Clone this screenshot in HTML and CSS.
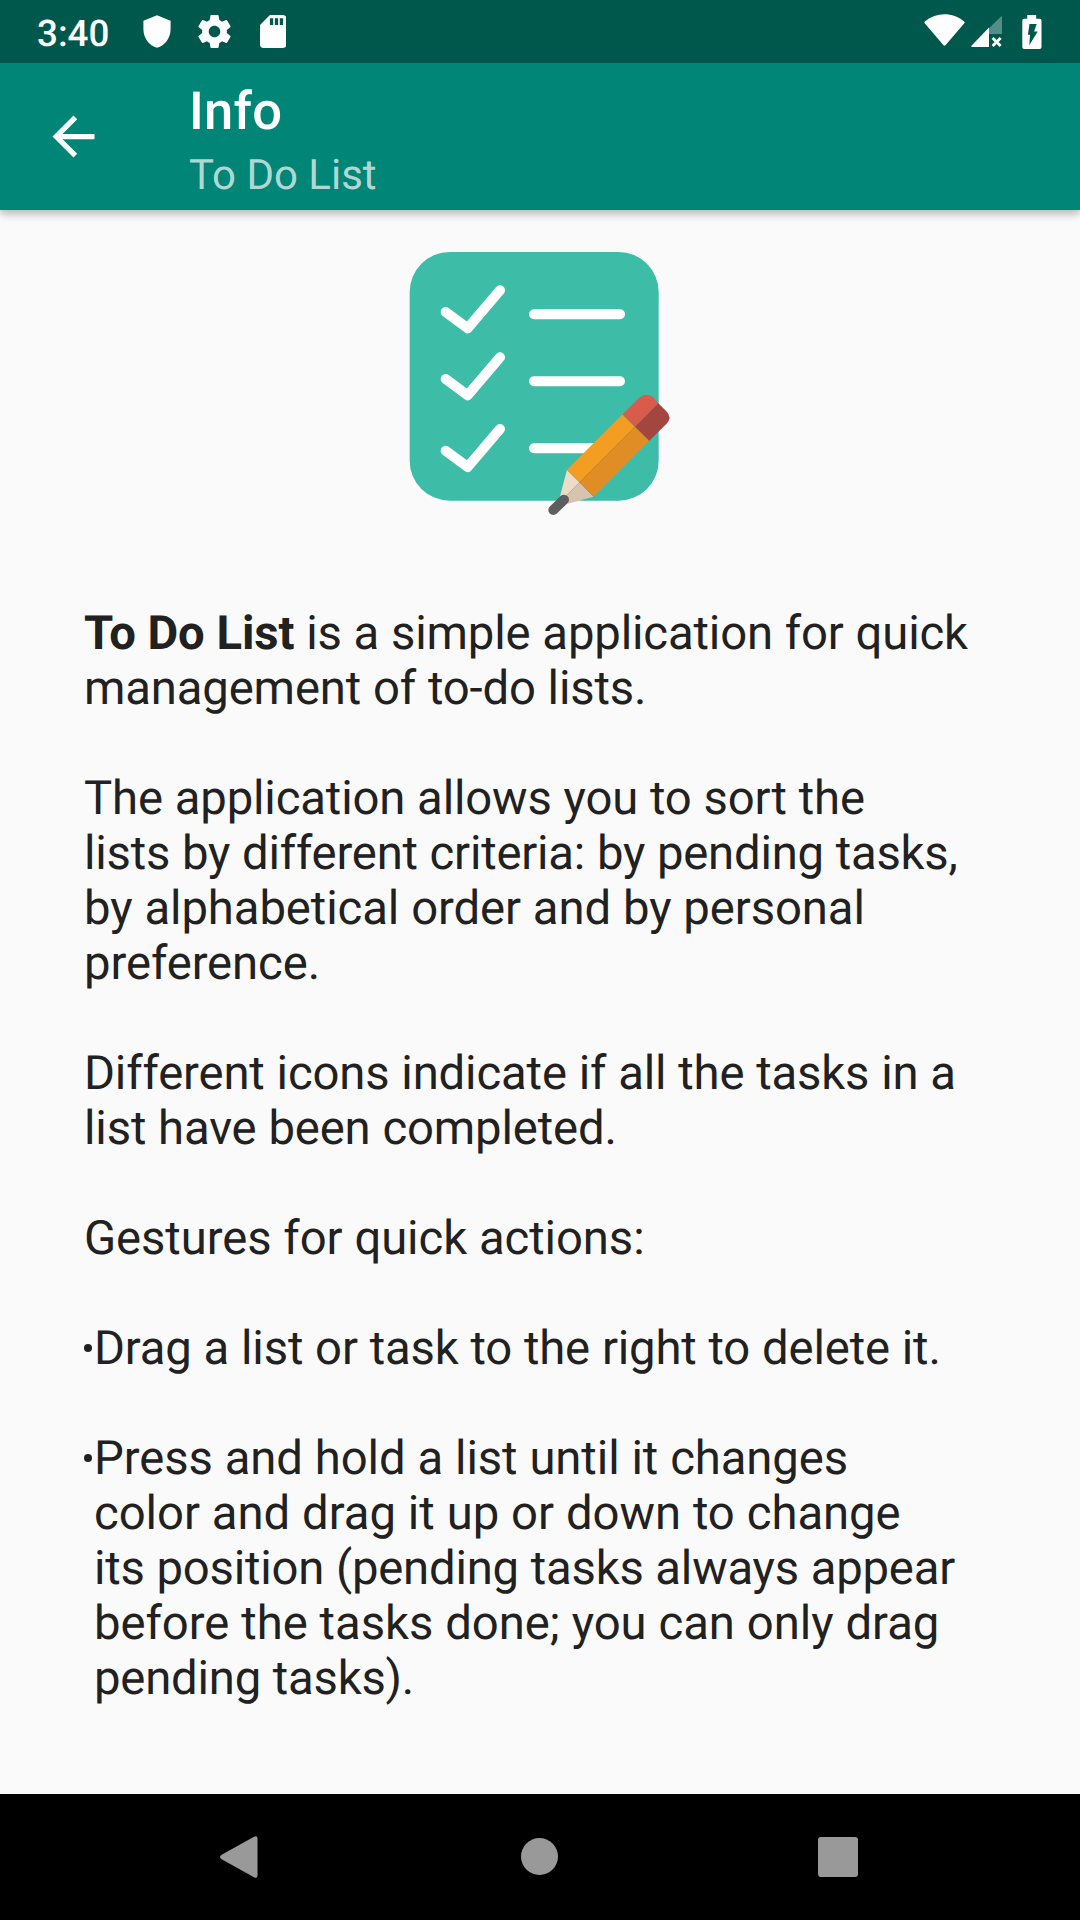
FILE: index.html
```html
<!DOCTYPE html>
<html lang="en">
<head>
<meta charset="utf-8">
<title>Info</title>
<link rel="stylesheet" href="styles.css">
</head>
<body>
<div class="status-bar">
  <span class="clock">3:40</span>
  <svg class="shield" viewBox="0 0 28 33"><path d="M14 .3 27.6 5.800V14C27.600 23 22 30.500 14 32.800 6 30.500.400 23 .400 14V5.800Z"/></svg>
  <svg class="gear" viewBox="2 2 20 20"><path d="M19.430 12.980c.04-.32.07-.64.07-.98s-.03-.66-.07-.98l2.110-1.650c.19-.15.24-.42.12-.64l-2-3.460c-.12-.22-.39-.3-.61-.22l-2.490 1c-.52-.4-1.080-.73-1.690-.98l-.38-2.650C14.460 2.180 14.250 2 14 2h-4c-.25 0-.46.18-.49.42l-.38 2.650c-.61.25-1.170.59-1.690.98l-2.490-1c-.23-.09-.49 0-.61.22l-2 3.460c-.13.22-.07.49.12.64l2.110 1.650c-.04.32-.07.65-.07.98s.03.66.07.98l-2.110 1.650c-.19.15-.24.42-.12.64l2 3.460c.12.22.39.3.61.22l2.490-1c.52.4 1.080.73 1.690.98l.38 2.650c.03.24.24.42.49.42h4c.25 0 .46-.18.49-.42l.38-2.650c.61-.25 1.170-.59 1.690-.98l2.490 1c.23.09.49 0 .61-.22l2-3.460c.12-.22.07-.49-.12-.64l-2.110-1.650zM12 15.500c-1.930 0-3.500-1.570-3.500-3.500s1.570-3.500 3.500-3.500 3.500 1.570 3.500 3.500-1.570 3.500-3.500 3.500z"/></svg>
  <svg class="sd-card" viewBox="4 2 16 20"><path d="M18 2h-8L4.020 8 4 20c0 1.100.9 2 2 2h12c1.100 0 2-.9 2-2V4c0-1.100-.9-2-2-2zm-6 6h-2V4h2v4zm3 0h-2V4h2v4zm3 0h-2V4h2v4z"/></svg>
  <div class="system-icons">
    <svg class="wifi" viewBox="0 0 41 32"><path d="M.7 9.200Q-.1 8.200.8 7.500C7 2.700 13.300.300 20.500.300S34 2.700 40.200 7.500q.9.700.1 1.700L21.700 31q-1.200 1.300-2.400 0Z"/></svg>
    <svg class="signal" viewBox="0 0 32 32"><path opacity=".33" d="M18 12.300 30 .5q1-.8 1 .4V18H18Z"/><path d="M18 11.600V31H1.200q-1.700 0-.5-1.400Z"/><path class="cross" d="m21.600 22 8 8m0-8-8 8"/></svg>
    <svg class="battery" viewBox="0 0 20 34"><path fill-rule="evenodd" d="M5.200 0h9v3.700h3.300q2 0 2 2V32q0 2-2 2H2.300q-2 0-2-2V5.700q0-2 2-2h2.900ZM7.500 9h7.200l-2.600 7.500h3.600L7.300 30.300l.7-10.600H5.900Z"/></svg>
  </div>
</div>
<header class="app-bar">
  <svg class="back" viewBox="0 0 24 24"><path d="M20 11H7.830l5.590-5.590L12 4l-8 8 8 8 1.410-1.410L7.830 13H20v-2z"/></svg>
  <div class="titles">
    <h1>Info</h1>
    <h2>To Do List</h2>
  </div>
</header>
<main class="content">
  <svg class="logo" viewBox="0 0 900 900">
    <rect x="59" y="66" width="747" height="746" rx="120" fill="#3dbda7"/>
    <g fill="none" stroke="#fff" stroke-width="30" stroke-linecap="round" stroke-linejoin="round">
      <path d="m167 246 66 49 97-114M167 447l66 49 97-114M167 662l66 49 97-114"/>
      <path d="M432 252.500h258M432 453.500h258M432 654.500h200"/>
    </g>
    <path fill="#eedcc7" d="m531 719 38 38-45 52-14-10Z"/>
    <path fill="#d7c4af" d="m569 757 42 43-78 21-11-18Z"/>
    <path fill="#f39d22" d="m698 553 37 37-166 167-38-38Z"/>
    <path fill="#e08d25" d="m735 590 43 42-167 168-42-43Z"/>
    <path fill="#d95b4c" d="m698 553 49-49q22-20 45 0l13 16-70 70Z"/>
    <path fill="#a44640" d="m805 520 24 24q19 19 0 38l-51 50-43-42Z"/>
    <path fill="none" stroke="#6b6b45" stroke-opacity=".4" stroke-width="2" d="M805 520 522 804M698 553l80 79M531 719l80 81"/>
    <path fill="none" stroke="#5e5e5e" stroke-width="30" stroke-linecap="round" d="m490 840 32-31"/>
  </svg>
  <div class="info">
    <p>
      <span class="line snug"><b>To Do List</b> is a simple application for quick</span>
      <span class="line snug">management of to-do lists.</span>
    </p>
    <p>
      <span class="line snug">The application allows you to sort the</span>
      <span class="line tight">lists by different criteria: by pending tasks,</span>
      <span class="line">by alphabetical order and by personal</span>
      <span class="line">preference.</span>
    </p>
    <p>
      <span class="line snug">Different icons indicate if all the tasks in a</span>
      <span class="line snug">list have been completed.</span>
    </p>
    <p>Gestures for quick actions:</p>
    <ul>
      <li><span class="line snug">Drag a list or task to the right to delete it.</span></li>
      <li>
        <div>
          <span class="line">Press and hold a list until it changes</span>
          <span class="line loose">color and drag it up or down to change</span>
          <span class="line tight">its position (pending tasks always appear</span>
          <span class="line loose">before the tasks done; you can only drag</span>
          <span class="line tight">pending tasks).</span>
        </div>
      </li>
    </ul>
  </div>
</main>
<nav class="nav-bar">
  <svg class="nav-back" viewBox="0 0 38 42"><path d="M1.200 19 34 .7q3.500-1.700 3.500 1.800v37q0 3.500-3.500 1.800L1.200 23q-2.400-2 0-4Z"/></svg>
  <span class="nav-home"></span>
  <span class="nav-recent"></span>
</nav>
</body>
</html>
```
FILE: styles.css
```css
* {
  box-sizing: border-box;
}

body {
  margin: 0;
  width: 1080px;
  height: 1920px;
  display: flex;
  flex-direction: column;
  overflow: hidden;
  background: #fafafa;
  color: #212121;
  font-family: Roboto, sans-serif;
  text-rendering: geometricPrecision;
}

svg {
  display: block;
  flex: none;
}

.status-bar {
  height: 63px;
  flex: none;
  display: flex;
  align-items: center;
  padding: 0 38px 0 37px;
  background: #00574b;
  color: #fff;
  fill: #fff;
}

.clock {
  width: 106px;
  font-size: 36.75px;
  font-weight: 500;
  line-height: 43px;
  padding-top: 3px;
}

.shield {
  width: 28px;
  height: 33px;
}

.gear {
  width: 33px;
  height: 33px;
  margin-left: 27px;
}

.sd-card {
  width: 26.400px;
  height: 33px;
  margin-left: 28.500px;
}

.system-icons {
  display: flex;
  align-items: center;
  margin-left: auto;
}

.wifi {
  width: 41px;
  height: 32px;
  margin-top: -3px;
}

.signal {
  width: 32px;
  height: 32px;
  margin-left: 6px;
}

.cross {
  fill: none;
  stroke: #fff;
  stroke-width: 2.800;
}

.battery {
  width: 20px;
  height: 34px;
  margin-left: 19px;
}

.app-bar {
  height: 147px;
  flex: none;
  display: flex;
  padding-left: 42px;
  background: #008577;
  color: #fff;
  box-shadow: 0 4px 8px rgba(0, 0, 0, .27);
}

.back {
  width: 63px;
  height: 63px;
  align-self: center;
  fill: #fff;
}

.titles {
  padding: 17px 0 0 84px;
}

.titles h1 {
  margin: 0;
  font-size: 52.500px;
  font-weight: 500;
  line-height: 62px;
  letter-spacing: .2px;
}

.titles h2 {
  margin: 9px 0 0;
  font-size: 42px;
  font-weight: 400;
  line-height: 49px;
  color: rgba(255, 255, 255, .7);
}

.content {
  flex: 1;
  padding-top: 20px;
}

.logo {
  width: 300px;
  height: 300px;
  margin: 0 auto;
}

.info {
  padding: 76px 84px 0;
  font-size: 47.250px;
  line-height: 55px;
  letter-spacing: -.09px;
  word-spacing: .3px;
  white-space: nowrap;
}

.line {
  display: block;
}

.loose {
  letter-spacing: -.05px;
}

.snug {
  letter-spacing: -.15px;
}

.tight {
  letter-spacing: -.21px;
}

.info p {
  margin: 0 0 55px;
}

.info ul {
  margin: 0;
  padding: 0;
  list-style: none;
}

.info li {
  display: flex;
  margin-bottom: 55px;
}

.info li::before {
  content: "";
  width: 8px;
  height: 8px;
  margin: 23px 2px 0 0;
  border-radius: 50%;
  background: #212121;
}

.nav-bar {
  height: 126px;
  flex: none;
  display: flex;
  align-items: center;
  padding-left: 220px;
  background: #000;
}

.nav-back {
  width: 38px;
  height: 42px;
  fill: #999;
}

.nav-home {
  width: 37px;
  height: 37px;
  margin: -1px 0 0 263px;
  border-radius: 50%;
  background: #999;
}

.nav-recent {
  width: 40px;
  height: 40px;
  margin-left: 260px;
  border-radius: 3px;
  background: #999;
}
```
